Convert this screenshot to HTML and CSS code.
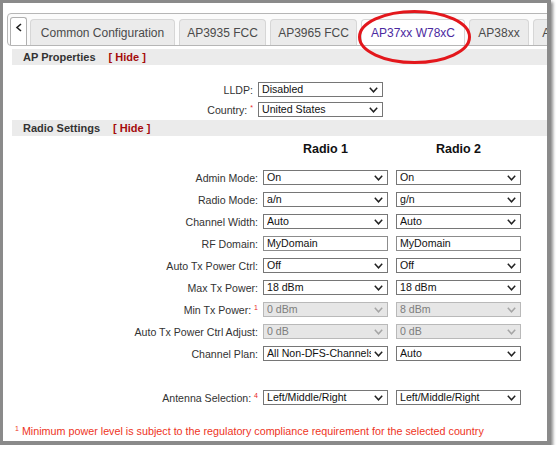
FILE: index.html
```html
<!DOCTYPE html>
<html>
<head>
<meta charset="utf-8">
<link rel="stylesheet" href="styles.css">
</head>
<body>
<div class="frame">
  <div class="tabbar">
    <div class="nav-prev"><svg width="8" height="9" viewBox="0 0 8 9"><polyline points="6,1 2,4.5 6,8" fill="none" stroke="#222" stroke-width="1.6"/></svg></div>
    <div class="tab tab-w145">Common Configuration</div>
    <div class="tab tab-w87">AP3935 FCC</div>
    <div class="tab tab-w87">AP3965 FCC</div>
    <div class="tab tab-w104 active">AP37xx W78xC</div>
    <div class="tab tab-w60">AP38xx</div>
    <div class="tab tab-w60">AP39xx</div>
  </div>

  <div class="panel">
    <div class="section-head"><span class="section-title">AP Properties</span><span class="hide-link">[ Hide ]</span></div>
    <div class="props">
      <div class="label">LLDP:</div>
      <div class="select"><span class="val">Disabled</span><svg class="chev" width="9" height="6" viewBox="0 0 9 6"><polyline points="0.8,0.8 4.5,4.8 8.2,0.8" fill="none" stroke-width="1.5"/></svg></div>
      <div class="label">Country: <sup class="mark">*</sup></div>
      <div class="select"><span class="val">United States</span><svg class="chev" width="9" height="6" viewBox="0 0 9 6"><polyline points="0.8,0.8 4.5,4.8 8.2,0.8" fill="none" stroke-width="1.5"/></svg></div>
    </div>

    <div class="section-head"><span class="section-title">Radio Settings</span><span class="hide-link">[ Hide ]</span></div>
    <div class="radios">
      <div></div>
      <div class="radio-title">Radio 1</div>
      <div class="radio-title col2">Radio 2</div>

      <div class="label">Admin Mode:</div>
      <div class="select"><span class="val">On</span><svg class="chev" width="9" height="6" viewBox="0 0 9 6"><polyline points="0.8,0.8 4.5,4.8 8.2,0.8" fill="none" stroke-width="1.5"/></svg></div>
      <div class="select col2"><span class="val">On</span><svg class="chev" width="9" height="6" viewBox="0 0 9 6"><polyline points="0.8,0.8 4.5,4.8 8.2,0.8" fill="none" stroke-width="1.5"/></svg></div>

      <div class="label">Radio Mode:</div>
      <div class="select"><span class="val">a/n</span><svg class="chev" width="9" height="6" viewBox="0 0 9 6"><polyline points="0.8,0.8 4.5,4.8 8.2,0.8" fill="none" stroke-width="1.5"/></svg></div>
      <div class="select col2"><span class="val">g/n</span><svg class="chev" width="9" height="6" viewBox="0 0 9 6"><polyline points="0.8,0.8 4.5,4.8 8.2,0.8" fill="none" stroke-width="1.5"/></svg></div>

      <div class="label">Channel Width:</div>
      <div class="select"><span class="val">Auto</span><svg class="chev" width="9" height="6" viewBox="0 0 9 6"><polyline points="0.8,0.8 4.5,4.8 8.2,0.8" fill="none" stroke-width="1.5"/></svg></div>
      <div class="select col2"><span class="val">Auto</span><svg class="chev" width="9" height="6" viewBox="0 0 9 6"><polyline points="0.8,0.8 4.5,4.8 8.2,0.8" fill="none" stroke-width="1.5"/></svg></div>

      <div class="label">RF Domain:</div>
      <div class="input">MyDomain</div>
      <div class="input col2">MyDomain</div>

      <div class="label">Auto Tx Power Ctrl:</div>
      <div class="select"><span class="val">Off</span><svg class="chev" width="9" height="6" viewBox="0 0 9 6"><polyline points="0.8,0.8 4.5,4.8 8.2,0.8" fill="none" stroke-width="1.5"/></svg></div>
      <div class="select col2"><span class="val">Off</span><svg class="chev" width="9" height="6" viewBox="0 0 9 6"><polyline points="0.8,0.8 4.5,4.8 8.2,0.8" fill="none" stroke-width="1.5"/></svg></div>

      <div class="label">Max Tx Power:</div>
      <div class="select"><span class="val">18 dBm</span><svg class="chev" width="9" height="6" viewBox="0 0 9 6"><polyline points="0.8,0.8 4.5,4.8 8.2,0.8" fill="none" stroke-width="1.5"/></svg></div>
      <div class="select col2"><span class="val">18 dBm</span><svg class="chev" width="9" height="6" viewBox="0 0 9 6"><polyline points="0.8,0.8 4.5,4.8 8.2,0.8" fill="none" stroke-width="1.5"/></svg></div>

      <div class="label">Min Tx Power: <sup class="mark">1</sup></div>
      <div class="select disabled"><span class="val">0 dBm</span><svg class="chev" width="9" height="6" viewBox="0 0 9 6"><polyline points="0.8,0.8 4.5,4.8 8.2,0.8" fill="none" stroke-width="1.5"/></svg></div>
      <div class="select disabled col2"><span class="val">8 dBm</span><svg class="chev" width="9" height="6" viewBox="0 0 9 6"><polyline points="0.8,0.8 4.5,4.8 8.2,0.8" fill="none" stroke-width="1.5"/></svg></div>

      <div class="label">Auto Tx Power Ctrl Adjust:</div>
      <div class="select disabled"><span class="val">0 dB</span><svg class="chev" width="9" height="6" viewBox="0 0 9 6"><polyline points="0.8,0.8 4.5,4.8 8.2,0.8" fill="none" stroke-width="1.5"/></svg></div>
      <div class="select disabled col2"><span class="val">0 dB</span><svg class="chev" width="9" height="6" viewBox="0 0 9 6"><polyline points="0.8,0.8 4.5,4.8 8.2,0.8" fill="none" stroke-width="1.5"/></svg></div>

      <div class="label">Channel Plan:</div>
      <div class="select"><span class="val">All Non-DFS-Channels</span><svg class="chev" width="9" height="6" viewBox="0 0 9 6"><polyline points="0.8,0.8 4.5,4.8 8.2,0.8" fill="none" stroke-width="1.5"/></svg></div>
      <div class="select col2"><span class="val">Auto</span><svg class="chev" width="9" height="6" viewBox="0 0 9 6"><polyline points="0.8,0.8 4.5,4.8 8.2,0.8" fill="none" stroke-width="1.5"/></svg></div>

      <div class="spacer"></div>

      <div class="label">Antenna Selection: <sup class="mark">4</sup></div>
      <div class="select"><span class="val">Left/Middle/Right</span><svg class="chev" width="9" height="6" viewBox="0 0 9 6"><polyline points="0.8,0.8 4.5,4.8 8.2,0.8" fill="none" stroke-width="1.5"/></svg></div>
      <div class="select col2"><span class="val">Left/Middle/Right</span><svg class="chev" width="9" height="6" viewBox="0 0 9 6"><polyline points="0.8,0.8 4.5,4.8 8.2,0.8" fill="none" stroke-width="1.5"/></svg></div>
    </div>

    <p class="footnote"><sup class="fn-mark">1</sup> Minimum power level is subject to the regulatory compliance requirement for the selected country</p>
  </div>

  <svg class="highlight" width="114" height="56" viewBox="0 0 114 56"><ellipse cx="56.5" cy="28" rx="55" ry="25.5" fill="none" stroke="#e3171c" stroke-width="3"/></svg>
</div>
</body>
</html>
```

FILE: styles.css
```css
* { box-sizing: border-box; }

html, body {
  margin: 0;
  padding: 0;
  background: #ffffff;
}

body {
  font-family: "Liberation Sans", Arial, sans-serif;
  color: #333;
}

.frame {
  position: relative;
  width: 551px;
  height: 445px;
  border-style: solid;
  border-color: #8a8a8a;
  border-width: 3px 4px 4px 3px;
  background: #fff;
  overflow: hidden;
  box-shadow: 2px 2px 3px rgba(0, 0, 0, 0.45);
}

/* ---------- tabs ---------- */
.tabbar {
  display: flex;
  align-items: flex-end;
  gap: 4px;
  width: 640px;
  margin: 10px 0 0 4px;
  padding: 3px 0 0 2px;
  border: 1px solid #b6b6b6;
  border-radius: 4px;
  background: #fbfbfb;
}

.nav-prev {
  flex: 0 0 17px;
  height: 28px;
  margin-right: -1px;
  border: 1px solid #b0b0b0;
  border-bottom: none;
  border-radius: 3px 3px 0 0;
  background: #fff;
  display: flex;
  justify-content: center;
  padding-top: 5px;
}

.nav-prev svg { display: block; }

.tab {
  flex: 0 0 auto;
  height: 26px;
  display: flex;
  align-items: center;
  justify-content: center;
  border: 1px solid #d6d6d6;
  border-bottom: none;
  border-radius: 4px 4px 0 0;
  background: #ebebeb;
  color: #4a4a4a;
  font-size: 12px;
  white-space: nowrap;
}

.tab-w145 { width: 145px; }
.tab-w104 { width: 104px; }
.tab-w87 { width: 87px; }
.tab-w60 { width: 60px; }

.tab.active {
  background: #fff;
  color: #4b2aa0;
}

/* ---------- panel ---------- */
.panel {
  margin: 3px 0 0 9px;
}

.section-head {
  height: 16px;
  width: 560px;
  display: flex;
  align-items: center;
  gap: 13px;
  padding-left: 11px;
  background: #ebebeb;
  font-size: 11px;
  font-weight: bold;
}

.section-title { color: #333; }
.hide-link { color: #a50b0b; }

.label {
  text-align: right;
  font-size: 10.6px;
  color: #333;
  white-space: nowrap;
}

.mark {
  color: #e8261e;
  font-size: 7px;
  vertical-align: 4px;
  line-height: 0;
}

.props {
  display: grid;
  grid-template-columns: 241px 125px;
  column-gap: 5px;
  row-gap: 5px;
  align-items: center;
  padding: 17px 0 3px;
}

.radios {
  display: grid;
  grid-template-columns: 246px 125px 128px;
  column-gap: 5px;
  row-gap: 7px;
  align-items: center;
  padding-top: 5px;
}

.radios .col2 {
  margin-left: 3px;
}

.radio-title {
  text-align: center;
  font-size: 12.5px;
  font-weight: bold;
  color: #111;
  line-height: 16px;
  margin-bottom: 6px;
}

.spacer {
  grid-column: 1 / -1;
  height: 15px;
}

.select,
.input {
  position: relative;
  height: 15px;
  border: 1px solid #767676;
  background: #fff;
  font-size: 10.6px;
  line-height: 13px;
  color: #111;
  padding-left: 3px;
  white-space: nowrap;
  overflow: hidden;
}

.select {
  display: flex;
  align-items: center;
  padding-right: 4px;
}

.select .val {
  flex: 1;
  overflow: hidden;
}

.chev {
  flex: 0 0 9px;
  margin-left: 3px;
  stroke: #222;
}

.input {
  border-color: #8c8c8c;
}

.select.disabled {
  background: #e6e6e6;
  border-color: #b9b9b9;
  color: #7d7d7d;
}

.select.disabled .chev { stroke: #a5a5a5; }

.footnote {
  margin: 20px 0 0 3px;
  font-size: 10.75px;
  color: #ee3424;
  white-space: nowrap;
}

.fn-mark {
  font-size: 7px;
  vertical-align: 4px;
  line-height: 0;
}

/* ---------- annotation ---------- */
.highlight {
  position: absolute;
  left: 355px;
  top: 6px;
}
```
